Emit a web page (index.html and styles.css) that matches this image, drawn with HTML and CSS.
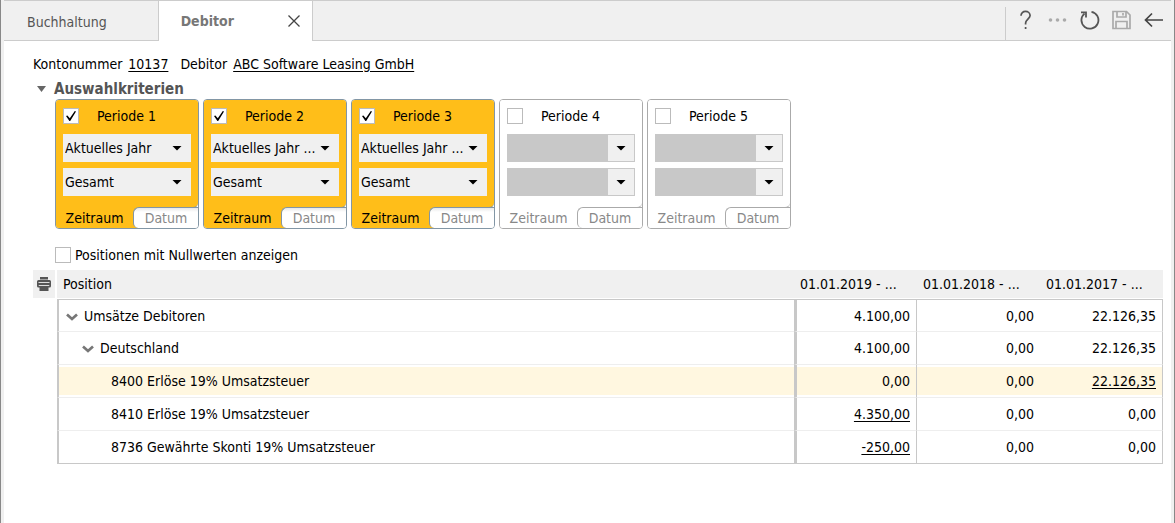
FILE: index.html
```
<!DOCTYPE html>
<html lang="de">
<head>
<meta charset="utf-8">
<title>Debitor</title>
<link rel="stylesheet" href="styles.css">
</head>
<body>
<div class="window">
  <header class="topbar">
    <nav class="tabs">
      <a class="tab" href="#buchhaltung">Buchhaltung</a>
      <div class="tab tab-active">
        <a class="tab-link" href="#debitor">Debitor</a>
        <button class="icon-button close" aria-label="Schließen"><svg width="14" height="14" viewBox="0 0 14 14"><path d="M1.500 1.500l11 11M12.500 1.500L1.500 12.500" fill="none" stroke="#444" stroke-width="1.300"/></svg></button>
      </div>
    </nav>
    <div class="toolbar">
      <button class="icon-button" aria-label="Hilfe"><svg width="20" height="20" viewBox="0 0 20 20"><path d="M5 5.800C5 3 7 1.400 9.500 1.400s4.600 1.600 4.600 4.200c0 2.800-4.500 4.400-4.500 7.400v1.600M9.600 17v2" fill="none" stroke="#555" stroke-width="1.700"/></svg></button>
      <button class="icon-button" aria-label="Mehr"><svg width="20" height="20" viewBox="0 0 20 20"><g fill="#aaa"><circle cx="2.500" cy="10" r="1.800"/><circle cx="9.500" cy="10" r="1.800"/><circle cx="16.500" cy="10" r="1.800"/></g></svg></button>
      <button class="icon-button" aria-label="Aktualisieren"><svg width="20" height="20" viewBox="0 0 20 20"><path d="M11.500 1.800A8.500 8.500 0 1 1 4.500 3.600M1 2.300H6V7.500" fill="none" stroke="#555" stroke-width="1.800"/></svg></button>
      <button class="icon-button" aria-label="Speichern"><svg width="20" height="20" viewBox="0 0 20 20"><path d="M1 1.500H14.500L18 5V18.500H1ZM5 1.500V7H14V1.500M11 3V5.500M4 18.500V11.500H15V18.500" fill="none" stroke="#aaa" stroke-width="1.700"/></svg></button>
      <button class="icon-button" aria-label="Zurück"><svg width="20" height="20" viewBox="0 0 20 20"><path d="M19 10H1.500M8 3.500L1.500 10L8 16.500" fill="none" stroke="#444" stroke-width="1.700"/></svg></button>
    </div>
  </header>

  <main class="content">
    <p class="account">
      <span class="field">Kontonummer <a href="#konto">10137</a></span>
      <span class="field">Debitor <a href="#abc">ABC Software Leasing GmbH</a></span>
    </p>

    <h2 class="section-title"><button class="section-toggle"><span class="caret"></span>Auswahlkriterien</button></h2>

    <div class="periods">
      <section class="period period-on">
        <div class="period-main">
          <label class="check"><input type="checkbox" checked>Periode 1</label>
          <div class="dropdown"><select aria-label="Jahr Periode 1"><option>Aktuelles Jahr</option></select></div>
          <div class="dropdown"><select aria-label="Zeitraum Periode 1"><option>Gesamt</option></select></div>
        </div>
        <div class="period-tabs"><button class="mode">Zeitraum</button><button class="mode mode-off">Datum</button></div>
      </section>
      <section class="period period-on">
        <div class="period-main">
          <label class="check"><input type="checkbox" checked>Periode 2</label>
          <div class="dropdown"><select aria-label="Jahr Periode 2"><option>Aktuelles Jahr ...</option></select></div>
          <div class="dropdown"><select aria-label="Zeitraum Periode 2"><option>Gesamt</option></select></div>
        </div>
        <div class="period-tabs"><button class="mode">Zeitraum</button><button class="mode mode-off">Datum</button></div>
      </section>
      <section class="period period-on">
        <div class="period-main">
          <label class="check"><input type="checkbox" checked>Periode 3</label>
          <div class="dropdown"><select aria-label="Jahr Periode 3"><option>Aktuelles Jahr ...</option></select></div>
          <div class="dropdown"><select aria-label="Zeitraum Periode 3"><option>Gesamt</option></select></div>
        </div>
        <div class="period-tabs"><button class="mode">Zeitraum</button><button class="mode mode-off">Datum</button></div>
      </section>
      <section class="period">
        <div class="period-main">
          <label class="check"><input type="checkbox">Periode 4</label>
          <div class="dropdown"><select aria-label="Jahr Periode 4" disabled></select></div>
          <div class="dropdown"><select aria-label="Zeitraum Periode 4" disabled></select></div>
        </div>
        <div class="period-tabs"><button class="mode">Zeitraum</button><button class="mode mode-off">Datum</button></div>
      </section>
      <section class="period">
        <div class="period-main">
          <label class="check"><input type="checkbox">Periode 5</label>
          <div class="dropdown"><select aria-label="Jahr Periode 5" disabled></select></div>
          <div class="dropdown"><select aria-label="Zeitraum Periode 5" disabled></select></div>
        </div>
        <div class="period-tabs"><button class="mode">Zeitraum</button><button class="mode mode-off">Datum</button></div>
      </section>
    </div>

    <label class="check zero-rows"><input type="checkbox">Positionen mit Nullwerten anzeigen</label>

    <div class="report">
      <button class="icon-button print" aria-label="Drucken"><svg width="16" height="16" viewBox="0 0 16 16"><path d="M4 1h8v2.500H4ZM2.500 4h11q1.500 0 1.500 1.500V10q0 1.500-1.500 1.500H12.500V15h-9V11.500H2.500Q1 11.500 1 10V5.500Q1 4 2.500 4Z" fill="#555"/><path d="M2.500 6.500h11M3 10V9.500H13V10" fill="none" stroke="#ddd"/></svg></button>
      <table class="positions">
        <thead>
          <tr><th class="col-name">Position</th><th>01.01.2019 - ...</th><th>01.01.2018 - ...</th><th>01.01.2017 - ...</th></tr>
        </thead>
        <tbody>
          <tr><td class="level-1"><button class="icon-button expand" aria-label="Zuklappen"><svg width="12" height="8" viewBox="0 0 12 8"><path d="M1 1.500L6 6L11 1.500" fill="none" stroke="#777" stroke-width="2.700"/></svg></button>Umsätze Debitoren</td><td>4.100,00</td><td>0,00</td><td>22.126,35</td></tr>
          <tr><td class="level-2"><button class="icon-button expand" aria-label="Zuklappen"><svg width="12" height="8" viewBox="0 0 12 8"><path d="M1 1.500L6 6L11 1.500" fill="none" stroke="#777" stroke-width="2.700"/></svg></button>Deutschland</td><td>4.100,00</td><td>0,00</td><td>22.126,35</td></tr>
          <tr class="selected"><td class="level-3">8400 Erlöse 19% Umsatzsteuer</td><td>0,00</td><td>0,00</td><td><a href="#8400">22.126,35</a></td></tr>
          <tr><td class="level-3">8410 Erlöse 19% Umsatzsteuer</td><td><a href="#8410">4.350,00</a></td><td>0,00</td><td>0,00</td></tr>
          <tr><td class="level-3">8736 Gewährte Skonti 19% Umsatzsteuer</td><td><a href="#8736">-250,00</a></td><td>0,00</td><td>0,00</td></tr>
        </tbody>
      </table>
    </div>
  </main>
</div>
</body>
</html>
```
FILE: styles.css
```
* { box-sizing: border-box; }

body {
  margin: 0;
  background: #fff;
  color: #000;
  font: 14px/18px "DejaVu Sans Condensed", "Noto Sans", sans-serif;
}

button, select, input { font: inherit; color: inherit; margin: 0; }
button { border: 0; padding: 0; background: none; }
a { color: inherit; text-underline-offset: 2px; }

.window {
  min-height: 100vh;
  border-left: 1px solid #888;
  border-right: 1px solid #888;
  padding: 0 3px;
  background:
    linear-gradient(#f0f0f0, #f0f0f0) left / 3px 100% no-repeat,
    linear-gradient(#f0f0f0, #f0f0f0) right / 3px 100% no-repeat,
    #fff;
}

.topbar {
  display: flex;
  justify-content: space-between;
  height: 41px;
  border-top: 1px solid #ccc;
  background: linear-gradient(#ccc, #ccc) bottom / 100% 1px no-repeat #f0f0f0;
  color: #555;
}
.tabs { display: flex; }
.tab {
  display: flex;
  align-items: center;
  padding: 2px 51px 0 23px;
  text-decoration: none;
}
.tab-active {
  gap: 53px;
  padding: 0 11px 0 22px;
  border-left: 1px solid #ccc;
  border-right: 1px solid #ccc;
  background: #fff;
  color: #777;
  font-weight: bold;
}
.tab-link { text-decoration: none; }
.icon-button { display: inline-flex; align-items: center; justify-content: center; }

.toolbar {
  display: flex;
  align-items: center;
  gap: 12px;
  margin: 6px 7px 1px 0;
  padding: 0 0 8px 10px;
  border-left: 1px solid #ccc;
}

.content { padding: 14px 8px 0 29px; }
.account { display: flex; gap: 12px; margin: 0; }
.field { display: flex; gap: 6px; }

.section-title { margin: 7px 0 1px; font-size: 15px; line-height: 18px; color: #555; }
.section-toggle { display: flex; align-items: center; gap: 8px; padding-left: 4px; }
.caret { width: 9px; height: 6px; background: #666; clip-path: polygon(0 0, 100% 0, 50% 100%); }

.periods { display: flex; gap: 4px; padding-left: 22px; }
.period {
  --edge: #aaa;
  --fill: #fff;
  width: 144px;
  border: 1px solid var(--edge);
  border-radius: 4px;
  background: #fff;
  color: #888;
}
.period-on { --edge: #8296a5; --fill: #ffbe19; color: #000; }
.period-main {
  display: flex;
  flex-direction: column;
  gap: 6px;
  padding: 7px 7px 11px;
  border-bottom: 1px solid var(--edge);
  border-radius: 3px 3px 5px 0;
  background: var(--fill);
  color: #000;
}

.check { display: flex; align-items: center; }
.check input {
  appearance: none;
  display: grid;
  place-items: center;
  width: 16px;
  height: 16px;
  border: 1px solid #bbb;
  background: #fff;
}
.check input:checked::after {
  content: "";
  width: 10px;
  height: 10px;
  background: #000;
  clip-path: polygon(0 50%, 14% 46%, 38% 72%, 88% 0, 100% 6%, 42% 100%, 34% 100%);
}
.period .check { gap: 18px; margin-bottom: 3px; }

.dropdown { display: grid; align-items: center; }
.dropdown select {
  grid-area: 1 / 1;
  appearance: none;
  width: 100%;
  height: 28px;
  padding: 0 2px;
  border: 0;
  border-radius: 0;
  background: #f0f0f0;
}
.dropdown select:disabled {
  border: 1px solid #c8c8c8;
  background: linear-gradient(#f0f0f0, #f0f0f0) right / 26px 100% no-repeat #c8c8c8;
  opacity: 1;
}
.dropdown::after {
  content: "";
  grid-area: 1 / 1;
  justify-self: end;
  width: 10px;
  height: 5px;
  margin-right: 9px;
  background: #000;
  clip-path: polygon(0 0, 100% 0, 50% 100%);
  pointer-events: none;
  z-index: 1;
}

.period-tabs {
  display: flex;
  margin-top: -1px;
  border-radius: 0 0 3px 3px;
  background: linear-gradient(var(--fill), var(--fill)) left / 84px 100% no-repeat;
}
.mode { flex: 1; height: 21px; }
.mode-off {
  flex: 0 0 65px;
  border: solid var(--edge);
  border-width: 1px 0 0 1px;
  border-radius: 6px 0 3px 5px;
  background: #fff;
  color: #888;
}
.period-on .mode-off { background: linear-gradient(#e8e8e8, #fff 4px); }

.zero-rows { gap: 4px; margin: 17px 0 6px 22px; }

.report { display: flex; align-items: flex-start; gap: 2px; }
.print { flex: 0 0 22px; height: 28px; background: #f0f0f0; }

.positions {
  flex: 1;
  table-layout: fixed;
  border-collapse: separate;
  border-spacing: 0;
}
.positions th {
  width: 123px;
  height: 28px;
  padding: 0 6px;
  background: #f0f0f0;
  font-weight: normal;
  text-align: left;
}
.positions .col-name { width: auto; }
.positions td {
  height: 33px;
  padding: 0 6px;
  border-bottom: 1px solid #eee;
  text-align: right;
}
.positions td:first-child {
  border-left: 2px solid #c8c8c8;
  text-align: left;
}
.positions td:nth-child(2) {
  border-left: 3px solid #c8c8c8;
  border-right: 1px solid #c8c8c8;
}
.positions td:last-child { border-right: 1px solid #c8c8c8; }
.positions tbody tr:first-child td { border-top: 1px solid #c8c8c8; }
.positions tbody tr:last-child td { border-bottom-color: #c8c8c8; }
.positions tbody::before { content: ""; display: block; height: 1px; }
.selected td { background: linear-gradient(#fff7e0, #fff7e0) center / 100% 28px no-repeat; }
.positions .level-1 { padding-left: 7px; }
.positions .level-2 { padding-left: 23px; }
.positions .level-3 { padding-left: 52px; }
.expand { margin-right: 6px; vertical-align: middle; }
```
